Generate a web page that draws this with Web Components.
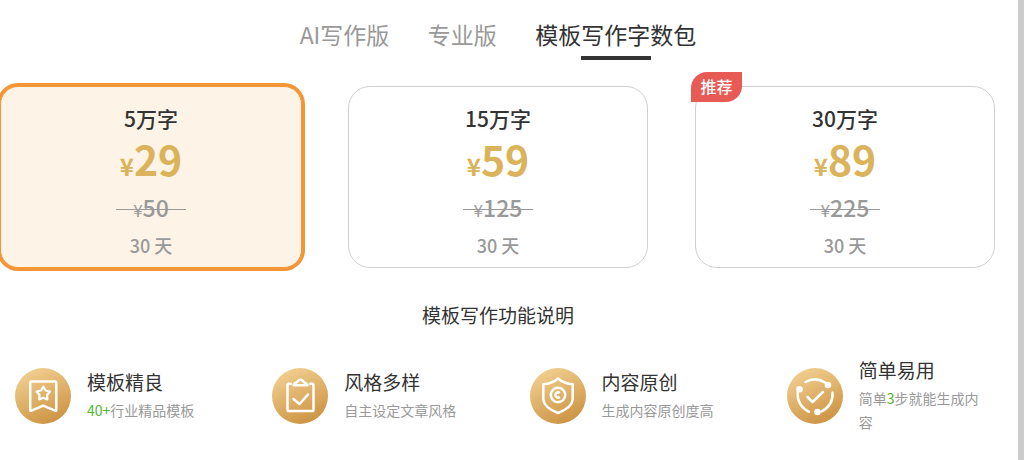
<!DOCTYPE html>
<html lang="zh-CN">
<head>
<meta charset="utf-8">
<meta name="viewport" content="width=device-width, initial-scale=1">
<title>模板写作字数包</title>
<style>
  html { background: #fff; }
  body {
    margin: 0;
    font-family: "Noto Sans CJK SC", sans-serif;
    color: #333;
  }
</style>
</head>
<body>
<pricing-page>
  <plan-tabs slot="tabs">
    <plan-tab>AI写作版</plan-tab>
    <plan-tab>专业版</plan-tab>
    <plan-tab active>模板写作字数包</plan-tab>
  </plan-tabs>

  <plan-card slot="plans" selected price="29" old-price="50" days="30">5万字</plan-card>
  <plan-card slot="plans" price="59" old-price="125" days="30">15万字</plan-card>
  <plan-card slot="plans" price="89" old-price="225" days="30" tag="推荐">30万字</plan-card>

  <span slot="heading">模板写作功能说明</span>

  <feature-item slot="features">
    <feature-icon slot="icon" name="bookmark"></feature-icon>
    <span slot="title">模板精良</span>
    <hot-text>40+</hot-text>行业精品模板
  </feature-item>
  <feature-item slot="features">
    <feature-icon slot="icon" name="clipboard"></feature-icon>
    <span slot="title">风格多样</span>
    自主设定文章风格
  </feature-item>
  <feature-item slot="features">
    <feature-icon slot="icon" name="shield"></feature-icon>
    <span slot="title">内容原创</span>
    生成内容原创度高
  </feature-item>
  <feature-item slot="features">
    <feature-icon slot="icon" name="orbit"></feature-icon>
    <span slot="title">简单易用</span>
    简单<hot-text>3</hot-text>步就能生成内容
  </feature-item>
</pricing-page>

<script>
  class ShadowElement extends HTMLElement {
    constructor() {
      super();
      this.attachShadow({ mode: 'open' });
    }
    connectedCallback() {
      this.shadowRoot.innerHTML = this.render();
    }
  }

  customElements.define('pricing-page', class extends ShadowElement {
    render() {
      return `
        <style>
          :host {
            display: block;
            box-sizing: border-box;
            min-height: 100vh;
            border-right: 6px solid #ccc;
            padding-top: 16px;
            overflow: hidden;
          }
          .plans {
            display: grid;
            grid-template-columns: repeat(3, 1fr);
            gap: 47px;
            margin: 26px 23px 0 1px;
          }
          h2 {
            margin: 32px 23px 0 1px;
            font-size: 19px;
            line-height: 30px;
            font-weight: 400;
            text-align: center;
          }
          .features {
            display: grid;
            grid-template-columns: repeat(4, 1fr);
            align-items: center;
            gap: 57px;
            margin: 24px 31px 0 15px;
          }
        </style>
        <main>
          <slot name="tabs"></slot>
          <section class="plans"><slot name="plans"></slot></section>
          <h2><slot name="heading"></slot></h2>
          <section class="features"><slot name="features"></slot></section>
        </main>`;
    }
  });

  customElements.define('plan-tabs', class extends ShadowElement {
    render() {
      return `
        <style>
          :host { display: block; margin: 0 23px 0 1px; }
          nav { display: flex; justify-content: center; gap: 38px; }
        </style>
        <nav><slot></slot></nav>`;
    }
  });

  customElements.define('plan-tab', class extends ShadowElement {
    render() {
      return `
        <style>
          :host { display: block; }
          button {
            display: flex;
            flex-direction: column;
            align-items: center;
            gap: 3px;
            padding: 0;
            border: 0;
            background: none;
            font: inherit;
            font-size: 23px;
            line-height: 37px;
            color: #999;
            cursor: pointer;
          }
          button::after { content: ""; width: 70px; height: 4px; }
          :host([active]) button { color: #333; }
          :host([active]) button::after { background: #333; }
        </style>
        <button type="button" aria-pressed="${this.hasAttribute('active')}"><slot></slot></button>`;
    }
  });

  customElements.define('plan-card', class extends ShadowElement {
    render() {
      const tag = this.getAttribute('tag');
      return `
        <style>
          :host { display: block; position: relative; }
          :host([selected]) { margin: 0 -1px; }
          button {
            display: flex;
            flex-direction: column;
            align-items: center;
            box-sizing: border-box;
            width: 100%;
            padding: 15px 0 8px;
            border: 1px solid #d0d0d0;
            border-radius: 22px;
            background: #fff;
            font: inherit;
            color: #333;
            cursor: pointer;
          }
          :host([selected]) button {
            border-color: #f49636;
            border-radius: 18px;
            background: #fdf3e6;
            box-shadow: 0 0 0 3px #f49636;
          }
          small { line-height: 1; }
          .name { font-size: 21px; line-height: 32px; font-weight: 500; }
          .price { font-size: 41px; line-height: 48px; font-weight: 700; color: #dbb35a; }
          .price small { font-size: 24px; }
          s {
            position: relative;
            width: 70px;
            margin-top: 6px;
            font-size: 23px;
            line-height: 38px;
            font-weight: 500;
            color: #999;
            text-decoration: none;
            text-align: center;
          }
          s small { font-size: 17px; font-weight: 400; }
          s::after {
            content: "";
            position: absolute;
            inset: 21px 0 auto;
            height: 1px;
            background: #999;
          }
          .days { margin-top: 5px; font-size: 18px; line-height: 28px; font-weight: 500; color: #999; }
          .tag {
            position: absolute;
            top: -14px;
            left: -4px;
            width: 51px;
            padding-bottom: 2px;
            border-radius: 16px 0 16px 0;
            background: #e85b54;
            color: #fff;
            font-size: 16px;
            line-height: 28px;
            font-weight: 500;
            text-align: center;
          }
        </style>
        <button type="button" aria-pressed="${this.hasAttribute('selected')}">
          <span class="name"><slot></slot></span>
          <span class="price"><small>¥</small>${this.getAttribute('price')}</span>
          <s><small>¥</small>${this.getAttribute('old-price')}</s>
          <span class="days">${this.getAttribute('days')} 天</span>
        </button>
        ${tag ? `<span class="tag">${tag}</span>` : ''}`;
    }
  });

  customElements.define('feature-item', class extends ShadowElement {
    render() {
      return `
        <style>
          :host { display: flex; align-items: center; gap: 16px; }
          .text { flex: 1; min-width: 0; }
          h3 { margin: 0; font-size: 19px; line-height: 32px; font-weight: 400; }
          p { margin: 0 0 4px; font-size: 14px; line-height: 24px; color: #999; }
        </style>
        <slot name="icon"></slot>
        <div class="text">
          <h3><slot name="title"></slot></h3>
          <p><slot></slot></p>
        </div>`;
    }
  });

  customElements.define('hot-text', class extends ShadowElement {
    render() {
      return `<style>:host { display: inline; color: #52b82e; }</style><slot></slot>`;
    }
  });

  const GLYPHS = {
    bookmark: `
      <path d="M16.500 13.500H40q1.300 0 1.300 1.300v27q0 1.500-1.300.900L28.300 37.600 16.500 42.700q-1.300.600-1.300-.900v-27q0-1.300 1.300-1.300z"/>
      <path stroke-width="2.200" d="M28.300 18.700l2.300 3.800 4.400 1-2.900 3.400.300 4.500-4.100-1.700-4.100 1.700.300-4.500-2.900-3.400 4.400-1z"/>`,
    clipboard: `
      <path d="M19 15.700h-2.200q-1.300 0-1.300 1.300v24.700q0 1.300 1.300 1.300h23.400q1.300 0 1.300-1.300V17q0-1.300-1.300-1.300H38"/>
      <path d="M21.500 17.300q.800-2.300 3.300-3.100 3.700-5 7.400 0 2.500.800 3.300 3.100z"/>
      <path d="M21.500 31l6 5 8.500-9.500"/>`,
    shield: `
      <path d="M28 10.500q6 5.300 14.700 5.700v15.300Q42 39.500 28 45 14 39.500 13.300 31.500V16.200Q22 15.800 28 10.500z"/>
      <circle cx="28" cy="27" r="7.200"/>
      <path d="M29.800 25.200a2.500 2.500 0 1 0 0 3.600" stroke-linecap="butt"/>`,
    orbit: `
      <path d="M18.500 14Q28.500 8.500 38 14.500"/>
      <path d="M45.500 24.500Q46.500 37 34.500 43.500"/>
      <path d="M10.800 24Q9.500 37 22 43.800"/>
      <g fill="#fff" stroke="none">
        <circle cx="41" cy="17" r="3.300"/>
        <circle cx="12.500" cy="21.300" r="3.300"/>
        <circle cx="30.500" cy="44" r="3.300"/>
      </g>
      <path d="M20.500 29l5 5 10.500-10"/>`
  };

  customElements.define('feature-icon', class extends ShadowElement {
    render() {
      return `
        <style>
          :host {
            display: block;
            flex: none;
            width: 56px;
            height: 56px;
            border-radius: 50%;
            background: linear-gradient(155deg, #f2d092 8%, #cd9444 88%);
          }
          svg { display: block; }
        </style>
        <svg width="56" height="56" viewBox="0 0 56 56" fill="none" stroke="#fff" stroke-width="2.500"
             stroke-linecap="round" stroke-linejoin="round" aria-hidden="true">${GLYPHS[this.getAttribute('name')]}</svg>`;
    }
  });
</script>
</body>
</html>
